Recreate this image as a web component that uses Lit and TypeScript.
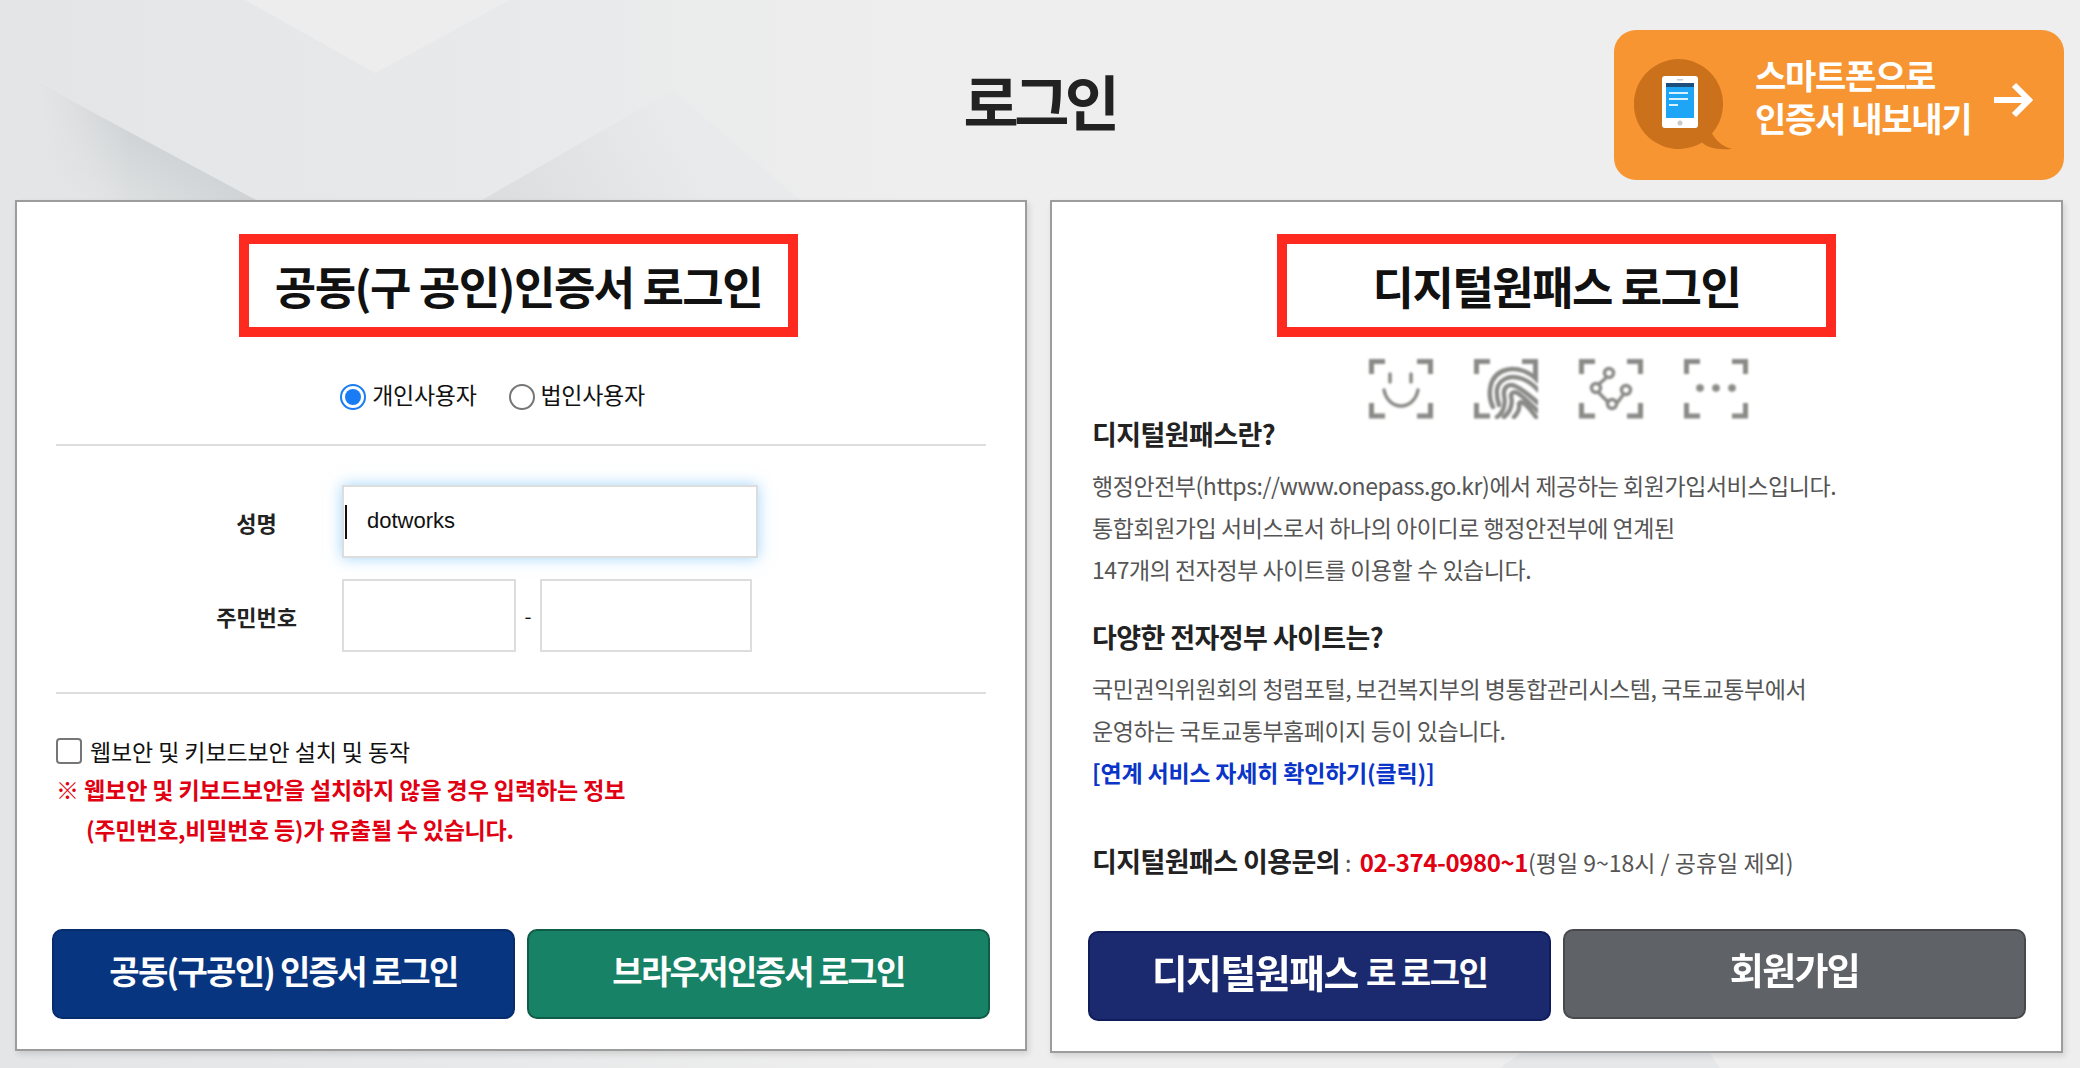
import { LitElement, html, css, svg } from "lit";
import { customElement } from "lit/decorators.js";

const corners = svg`<path d="M16 2.5H2.5V15M48 2.5H61.5V15M2.5 44V57H16M61.5 44V57H48" fill="none" stroke="#8a8a87" stroke-width="5"/>`;

@customElement("app-root")
export class AppRoot extends LitElement {
  static styles = css`
    :host {
      display: block;
      width: 2080px;
      height: 1068px;
      position: relative;
      overflow: hidden;
      background: #eeeeee;
      font-family: "Noto Sans CJK KR", "Noto Sans", sans-serif;
      color: #111;
    }
    .bg {
      position: absolute;
      inset: 0;
    }
    .page {
      position: relative;
      padding: 0 16px 0 15px;
    }
    .top {
      height: 200px;
      display: grid;
      grid-template-columns: 1fr auto 1fr;
      align-items: start;
    }
    .top h1 {
      margin: 0;
      padding-top: 58px;
      font-size: 60px;
      line-height: 84px;
      font-weight: 700;
      letter-spacing: -4.5px;
      color: #222;
    }
    .smart {
      justify-self: end;
      margin-top: 30px;
      width: 450px;
      height: 150px;
      box-sizing: border-box;
      border-radius: 22px;
      background: #f69532;
      display: flex;
      align-items: center;
      padding-left: 20px;
      color: #fff;
      font-weight: 700;
      font-size: 34px;
      line-height: 43px;
      letter-spacing: -1.3px;
    }
    .smart .bubble {
      width: 100px;
      height: 92px;
      flex: none;
      margin-right: 21px;
      filter: blur(0.5px);
    }
    .smart .label {
      width: 238px;
      margin-top: -18px;
    }
    .smart .arrow {
      width: 40px;
      height: 36px;
      margin-top: -10px;
    }
    .cards {
      display: flex;
      gap: 23px;
      align-items: flex-start;
    }
    .card {
      box-sizing: border-box;
      background: #fff;
      border: 2px solid #9c9c9c;
      box-shadow: 2px 3px 6px rgba(0, 0, 0, 0.12);
      position: relative;
    }
    .card.left {
      width: 1012px;
      height: 851px;
    }
    .card.right {
      width: 1013px;
      height: 853px;
    }
    .title {
      box-sizing: border-box;
      width: 559px;
      height: 103px;
      margin: 32px auto 0;
      border: 10px solid #ff2a1f;
      display: flex;
      align-items: center;
      justify-content: center;
      font-size: 45px;
      font-weight: 700;
      letter-spacing: -1.5px;
      color: #111;
      white-space: nowrap;
    }
    .left .title {
      margin-left: 222px;
    }
    .kind {
      display: flex;
      justify-content: center;
      align-items: center;
      height: 26px;
      margin-top: 47px;
      font-size: 23px;
      letter-spacing: -0.3px;
      padding-right: 57px;
      color: #111;
    }
    .kind label {
      display: flex;
      align-items: center;
    }
    .kind label span {
      flex: none;
    }
    .kind label + label {
      margin-left: 32px;
    }
    .kind .txt {
      position: relative;
      top: -3px;
    }
    .radio {
      width: 26px;
      height: 26px;
      box-sizing: border-box;
      border-radius: 50%;
      border: 2px solid #767676;
      margin-right: 6px;
      background: #fff;
    }
    .radio.on {
      border-color: #1a7cf5;
      padding: 3px;
    }
    .radio.on::after {
      content: "";
      display: block;
      width: 100%;
      height: 100%;
      border-radius: 50%;
      background: #1a7cf5;
    }
    hr {
      border: 0;
      height: 2px;
      background: #dddddd;
      margin: 0 39px;
    }
    .kind + hr {
      margin-top: 34px;
    }
    .form {
      display: grid;
      grid-template-columns: 325px auto;
      row-gap: 21px;
      padding-top: 39px;
      padding-bottom: 40px;
      align-items: center;
    }
    .form .name {
      text-align: center;
      font-size: 22px;
      font-weight: 700;
      letter-spacing: -0.1px;
      padding-left: 154px;
      box-sizing: border-box;
      width: 325px;
      color: #222;
    }
    .field {
      box-sizing: border-box;
      height: 73px;
      border: 2px solid #dddddd;
      background: #fff;
    }
    .field.active {
      width: 416px;
      box-shadow: 0 0 14px rgba(110, 190, 250, 0.65);
      display: flex;
      align-items: center;
      font-family: "Liberation Sans", Arial, sans-serif;
      font-size: 22px;
      color: #111;
      padding-bottom: 2px;
    }
    .caret {
      width: 2px;
      height: 34px;
      background: #111;
      margin-left: 1px;
      margin-right: 20px;
      margin-top: 2px;
    }
    .ssn {
      display: flex;
      align-items: center;
    }
    .ssn .a {
      width: 174px;
    }
    .ssn .b {
      width: 212px;
    }
    .ssn .dash {
      width: 24px;
      text-align: center;
      font-size: 20px;
    }
    .secure {
      padding: 44px 39px 0;
      font-size: 23px;
      letter-spacing: -0.1px;
      height: 160px;
      box-sizing: border-box;
    }
    .secure .check {
      display: flex;
      align-items: center;
      height: 26px;
      color: #111;
    }
    .box {
      width: 26px;
      height: 26px;
      box-sizing: border-box;
      border: 2px solid #767676;
      border-radius: 4px;
      margin-right: 8px;
    }
    .warn {
      margin: 5px 0 0;
      color: #e00012;
      font-weight: 700;
      line-height: 40px;
      letter-spacing: -0.1px;
    }
    .warn span {
      display: block;
      padding-left: 30px;
      letter-spacing: -0.25px;
    }
    .actions {
      position: absolute;
      left: 35px;
      right: 35px;
      bottom: 30px;
      display: flex;
      gap: 12px;
    }
    .right .actions {
      left: 36px;
      bottom: 32px;
    }
    .btn {
      flex: 1;
      height: 90px;
      box-sizing: border-box;
      border-radius: 10px;
      border: 2px solid;
      color: #fff;
      font-weight: 700;
      font-size: 33px;
      letter-spacing: -1.7px;
      display: flex;
      align-items: center;
      justify-content: center;
      white-space: nowrap;
      padding-bottom: 8px;
    }
    .btn.navy {
      background: #083580;
      border-color: #062c6c;
    }
    .btn.green {
      background: #178265;
      border-color: #0f5c47;
    }
    .btn.indigo {
      background: #1b2a6f;
      border-color: #0f1d5c;
      margin-top: 2px;
      margin-bottom: -2px;
      padding-bottom: 10px;
      letter-spacing: -1.5px;
    }
    .btn.gray {
      background: #5f6267;
      border-color: #48494d;
      padding-bottom: 10px;
    }
    .btn .big {
      font-size: 39px;
      margin-right: 8px;
      filter: blur(0.5px);
    }
    .gray .big {
      font-size: 37px;
      margin-right: 0;
    }
    .methods {
      display: flex;
      justify-content: center;
      gap: 41.3px;
      margin-top: 22px;
      padding-left: 4px;
    }
    .methods svg {
      width: 64px;
      height: 60px;
      filter: blur(0.8px);
    }
    .info {
      padding: 0 40px;
    }
    .info h3 {
      margin: 0;
      font-size: 27px;
      line-height: 34px;
      font-weight: 700;
      letter-spacing: -0.6px;
      color: #222;
    }
    .info p {
      margin: 0;
      font-size: 23px;
      line-height: 42px;
      color: #555;
      letter-spacing: -0.45px;
    }
    .info .q1 {
      margin-top: -2px;
    }
    .info .p1 {
      margin-top: 13px;
    }
    .info .q2 {
      margin-top: 30px;
    }
    .info a {
      display: block;
      color: #0a35c8;
      font-weight: 700;
      font-size: 23px;
      line-height: 42px;
      letter-spacing: -0.2px;
    }
    .contact {
      margin-top: 47px;
      font-size: 23px;
      color: #555;
      letter-spacing: 0;
      line-height: 42px;
      white-space: nowrap;
    }
    .contact b {
      color: #222;
      font-size: 27px;
      letter-spacing: -0.6px;
    }
    .contact em {
      font-style: normal;
      font-weight: 700;
      color: #e00012;
      font-size: 24px;
      letter-spacing: -0.4px;
      margin-left: 3px;
    }
  `;

  render() {
    return html`
      <svg class="bg" viewBox="0 0 2080 1068" aria-hidden="true">
        <defs>
          <linearGradient id="s1" gradientUnits="userSpaceOnUse" x1="130" y1="133" x2="92" y2="204">
            <stop offset="0" stop-color="#d0d4d6" />
            <stop offset="1" stop-color="#e2e4e5" />
          </linearGradient>
          <linearGradient id="s1fade" gradientUnits="userSpaceOnUse" x1="40" y1="0" x2="130" y2="0">
            <stop offset="0" stop-color="#e4e5e7" />
            <stop offset="1" stop-color="#e4e5e7" stop-opacity="0" />
          </linearGradient>
          <linearGradient id="s2" gradientUnits="userSpaceOnUse" x1="500" y1="190" x2="660" y2="100">
            <stop offset="0" stop-color="#dcdee0" />
            <stop offset="1" stop-color="#e9eaeb" />
          </linearGradient>
          <linearGradient id="s3" gradientUnits="userSpaceOnUse" x1="0" y1="0" x2="900" y2="0">
            <stop offset="0" stop-color="#e4e5e7" />
            <stop offset="0.55" stop-color="#e8e9ea" />
            <stop offset="1" stop-color="#eeeeee" />
          </linearGradient>
        </defs>
        <rect x="0" y="0" width="900" height="1068" fill="url(#s3)" />
        <polygon points="245,0 375,73 510,0" fill="#ededee" />
        <polygon points="40,84 256,200 40,200" fill="url(#s1)" />
        <polygon points="40,84 256,200 40,200" fill="url(#s1fade)" />
        <polygon points="482,200 673,90 800,200" fill="url(#s2)" />
        <polygon points="1500,1068 1540,1040 1700,1040 1720,1068" fill="#e6e7e9" />
      </svg>
      <div class="page">
        <header class="top">
          <div></div>
          <h1>로그인</h1>
          <div class="smart">
            <svg class="bubble" viewBox="0 0 100 92" aria-hidden="true">
              <path d="M45 0a45 45 0 1 0 23 83.600c6 5.400 14 7.400 30 6.400c-11-3-16-9-20-15.500A45 45 0 0 0 45 0z" fill="#cb711c" />
              <rect x="28" y="17" width="36" height="52" rx="3" fill="#fff" />
              <rect x="32" y="24" width="28" height="35" fill="#1fa5f5" />
              <rect x="32" y="24" width="28" height="4" fill="#1d4e7a" />
              <path d="M35 34h19M35 40h19M35 46h9" stroke="#d8f0ff" stroke-width="1.800" />
              <circle cx="46" cy="64" r="2.500" fill="#c9c9c9" />
              <rect x="43" y="20" width="6" height="1.500" fill="#c9c9c9" />
            </svg>
            <div class="label">스마트폰으로<br />인증서 내보내기</div>
            <svg class="arrow" viewBox="0 0 40 36" aria-hidden="true">
              <path d="M1 18H35M21 3L36 18L21 33" fill="none" stroke="#fff" stroke-width="6" />
            </svg>
          </div>
        </header>
        <div class="cards">
          <section class="card left">
            <div class="title">공동(구 공인)인증서 로그인</div>
            <div class="kind">
              <label><span class="radio on"></span><span class="txt">개인사용자</span></label>
              <label><span class="radio"></span><span class="txt">법인사용자</span></label>
            </div>
            <hr />
            <div class="form">
              <div class="name">성명</div>
              <div class="field active"><span class="caret"></span>dotworks</div>
              <div class="name">주민번호</div>
              <div class="ssn">
                <div class="field a"></div>
                <div class="dash">-</div>
                <div class="field b"></div>
              </div>
            </div>
            <hr />
            <div class="secure">
              <div class="check"><span class="box"></span>웹보안 및 키보드보안 설치 및 동작</div>
              <p class="warn">※ 웹보안 및 키보드보안을 설치하지 않을 경우 입력하는 정보<span>(주민번호,비밀번호 등)가 유출될 수 있습니다.</span></p>
            </div>
            <div class="actions">
              <div class="btn navy">공동(구공인) 인증서 로그인</div>
              <div class="btn green">브라우저인증서 로그인</div>
            </div>
          </section>
          <section class="card right">
            <div class="title">디지털원패스 로그인</div>
            <div class="methods">
              <svg viewBox="0 0 64 60" aria-hidden="true">
                ${corners}
                <path d="M21 15v8M42 15v8" stroke="#8a8a87" stroke-width="3.500" stroke-linecap="round" />
                <path d="M15 31c2 10 9 16 17 16s15-6 17-16" fill="none" stroke="#8a8a87" stroke-width="3.500" stroke-linecap="round" />
              </svg>
              <svg viewBox="0 0 64 60" aria-hidden="true">
                <path d="M16 2.500H2.500V15M48 2.500H61.500V20M2.500 44V57H16" fill="none" stroke="#8a8a87" stroke-width="5" />
                <g fill="none" stroke="#8a8a87" stroke-width="4.500" stroke-linecap="round">
                  <path d="M19 48C14 38 13 16 32 11C44 8 56 13 64 22" />
                  <path d="M25 46C22 36 20 24 33 19C42 16 54 20 64 31" />
                  <path d="M23 58C29 54 32 46 30 36C29 28 35 24 41 27C50 31 57 38 64 44" />
                  <path d="M30 58C37 52 39 45 37 37C37 33 41 32 45 35C52 40 58 47 64 52" />
                  <path d="M40 58C44 54 46 50 45 45C46 42 49 43 52 46C56 50 59 54 62 58" />
                </g>
              </svg>
              <svg viewBox="0 0 64 60" aria-hidden="true">
                ${corners}
                <g fill="none" stroke="#8a8a87" stroke-width="3.500">
                  <path d="M27 19L20 25M20 34L30 44M38 44L44 36" />
                  <circle cx="30" cy="14" r="4.500" />
                  <circle cx="17" cy="29" r="4.500" />
                  <circle cx="33" cy="45" r="4.500" />
                  <circle cx="47" cy="31" r="4.500" />
                </g>
              </svg>
              <svg viewBox="0 0 64 60" aria-hidden="true">
                ${corners}
                <g stroke="#8a8a87" stroke-width="2.600">
                  <path d="M16 25v8M12.500 27l7 4M19.500 27l-7 4" />
                  <path d="M32 25v8M28.500 27l7 4M35.500 27l-7 4" />
                  <path d="M48 25v8M44.500 27l7 4M51.500 27l-7 4" />
                </g>
              </svg>
            </div>
            <div class="info">
              <h3 class="q1">디지털원패스란?</h3>
              <p class="p1">행정안전부(https://www.onepass.go.kr)에서 제공하는 회원가입서비스입니다.<br />통합회원가입 서비스로서 하나의 아이디로 행정안전부에 연계된<br />147개의 전자정부 사이트를 이용할 수 있습니다.</p>
              <h3 class="q2">다양한 전자정부 사이트는?</h3>
              <p class="p1">국민권익위원회의 청렴포털, 보건복지부의 병통합관리시스템, 국토교통부에서<br />운영하는 국토교통부홈페이지 등이 있습니다.</p>
              <a>[연계 서비스 자세히 확인하기(클릭)]</a>
              <div class="contact"><b>디지털원패스 이용문의</b> : <em>02-374-0980~1</em>(평일 9~18시 / 공휴일 제외)</div>
            </div>
            <div class="actions">
              <div class="btn indigo"><span class="big">디지털원패스</span>로 로그인</div>
              <div class="btn gray"><span class="big">회원가입</span></div>
            </div>
          </section>
        </div>
      </div>
    `;
  }
}
